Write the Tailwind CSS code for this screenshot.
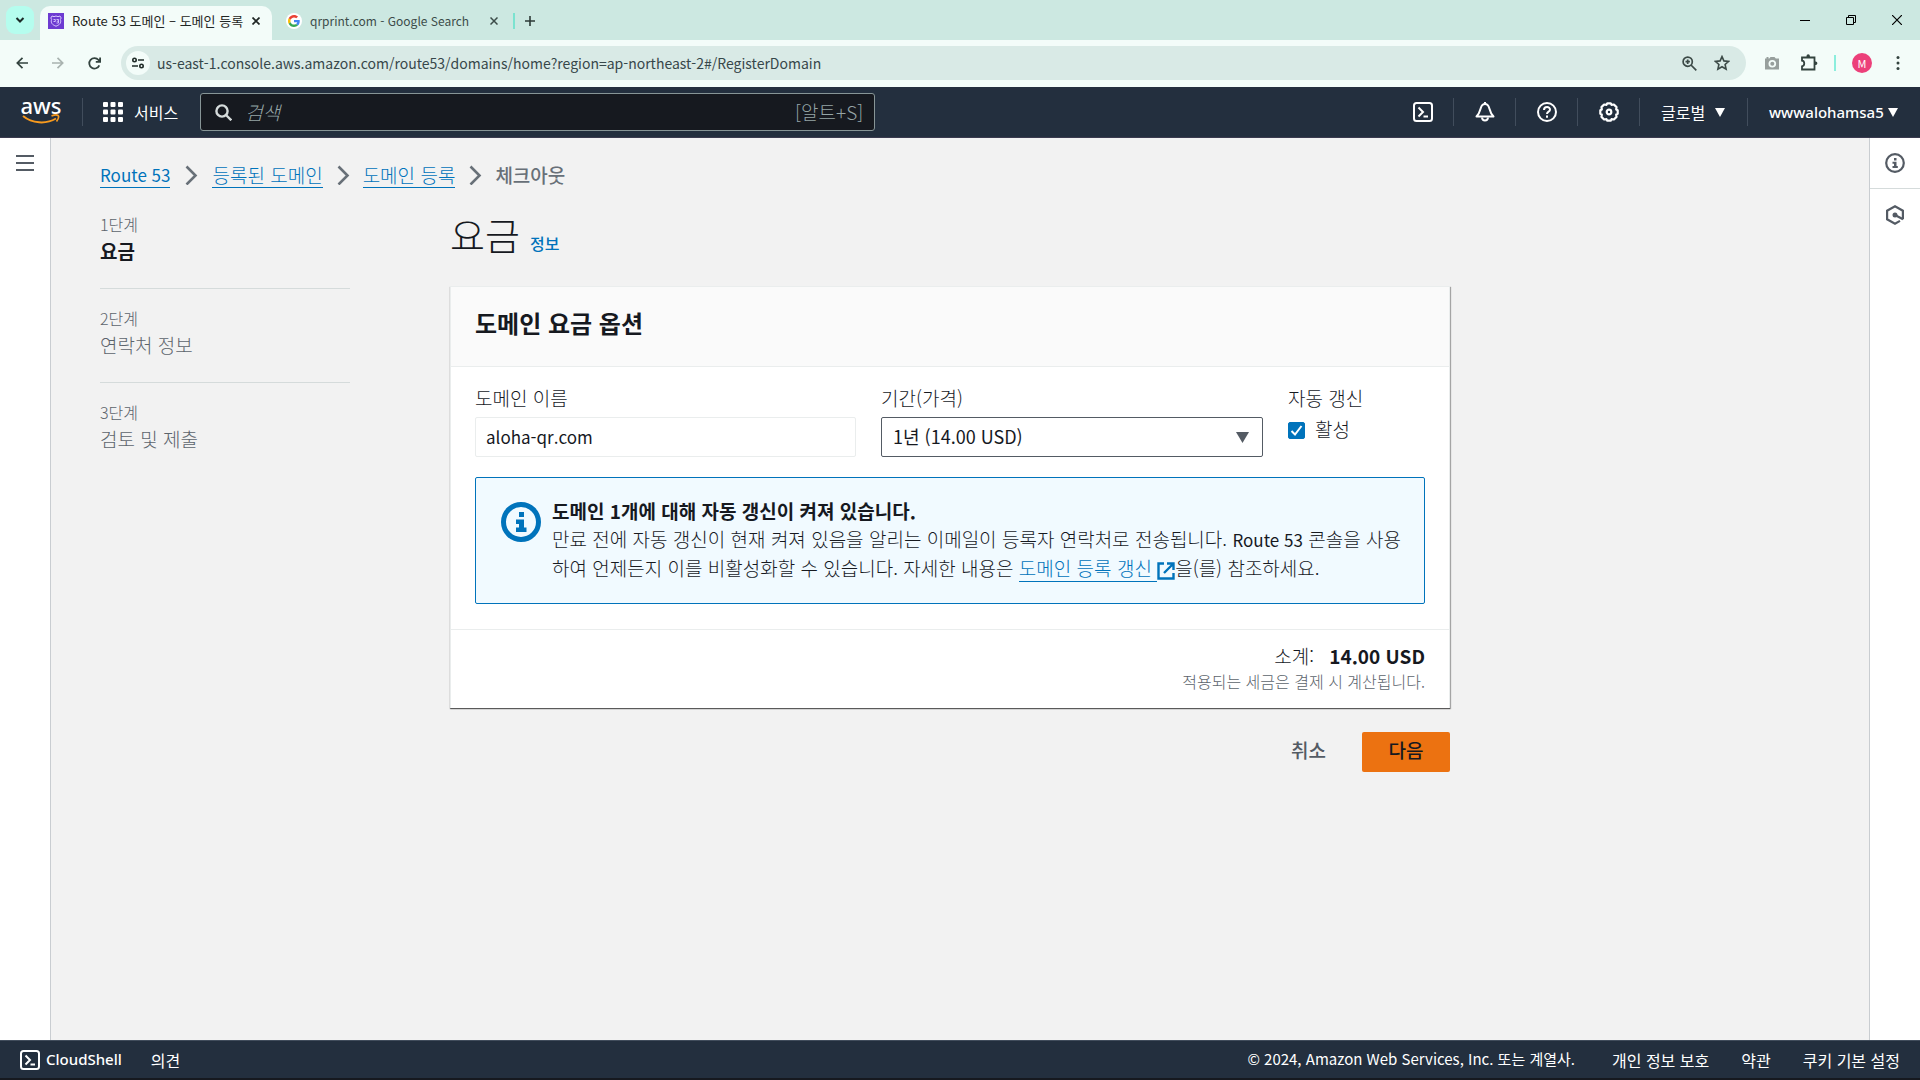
<!DOCTYPE html>
<html lang="ko">
<head>
  <meta charset="UTF-8" />
  <meta name="viewport" content="width=device-width, initial-scale=1" />
  <title>Route 53 도메인 – 도메인 등록</title>
  <script src="https://cdn.jsdelivr.net/npm/@tailwindcss/browser@4"></script>
</head>
<body class="min-h-screen flex flex-col bg-[#f2f2f2] text-[#16191f] font-['Noto_Sans_CJK_KR',sans-serif]">

  <!-- Browser tabs -->
  <div class="h-10 shrink-0 flex items-end bg-[#cce8e1] pl-[6px]">
    <button aria-label="탭 검색" class="size-[28px] mb-[6px] rounded-[9px] bg-[#b5fdee] flex items-center justify-center">
      <svg class="size-[10px]" viewBox="0 0 10 10" fill="none" stroke="#1c2b28" stroke-width="2"><path d="M1.500 3l3.500 3.500L8.500 3" /></svg>
    </button>
    <div class="w-[232px] h-[34px] ml-[6px] pl-2 pr-3 pb-1 flex items-center bg-[#f3fcf9] rounded-t-[10px] text-[13px] text-[#1f2624]">
      <svg class="size-4 shrink-0" viewBox="0 0 16 16">
        <rect width="16" height="16" fill="#6d3bd1" />
        <path d="M4 3l2 .7L8 3l2 .7L12 3l1.200 2-.8 1.500c1.200 3.500-1 5.500-4.400 6.700C4.600 12 2.400 10 3.600 6.500L2.800 5z" fill="none" stroke="#d9c8ff" stroke-width="1" />
        <path d="M5.500 6.500h1.800v2H5.500M8.500 6.500h2v3.500h-2M8.800 8.200h1.500" fill="none" stroke="#d9c8ff" stroke-width=".9" />
      </svg>
      <span class="ml-2 flex-1 whitespace-nowrap">Route 53 도메인 – 도메인 등록</span>
      <button aria-label="탭 닫기">
        <svg class="size-2" viewBox="0 0 8 8" stroke="#1f2624" stroke-width="1.700"><path d="M.5.5l7 7M7.500.5l-7 7" /></svg>
      </button>
    </div>
    <div class="w-[241px] h-[34px] pl-[14px] pr-[15px] pb-1 flex items-center text-[12px] text-[#3c4c49]">
      <span class="size-4 rounded-full bg-white flex items-center justify-center shrink-0">
        <svg class="size-3" viewBox="0 0 48 48">
          <path fill="#EA4335" d="M24 9.500c3.540 0 6.710 1.220 9.210 3.600l6.850-6.850C35.900 2.380 30.470 0 24 0 14.620 0 6.510 5.380 2.560 13.220l7.980 6.190C12.430 13.720 17.740 9.500 24 9.500z" />
          <path fill="#4285F4" d="M46.980 24.550c0-1.570-.15-3.090-.38-4.550H24v9.020h12.940c-.58 2.960-2.260 5.480-4.780 7.180l7.730 6c4.510-4.180 7.090-10.360 7.090-17.650z" />
          <path fill="#FBBC05" d="M10.530 28.590c-.48-1.450-.76-2.990-.76-4.590s.27-3.140.76-4.590l-7.980-6.190C.92 16.460 0 20.120 0 24c0 3.880.92 7.540 2.560 10.780l7.970-6.190z" />
          <path fill="#34A853" d="M24 48c6.480 0 11.930-2.130 15.890-5.810l-7.730-6c-2.150 1.450-4.920 2.300-8.160 2.300-6.260 0-11.570-4.220-13.470-9.910l-7.980 6.190C6.510 42.620 14.620 48 24 48z" />
        </svg>
      </span>
      <span class="ml-2 flex-1 whitespace-nowrap">qrprint.com - Google Search</span>
      <button aria-label="탭 닫기">
        <svg class="size-2" viewBox="0 0 8 8" stroke="#3c4c49" stroke-width="1.500"><path d="M.5.5l7 7M7.500.5l-7 7" /></svg>
      </button>
    </div>
    <div class="h-[34px] pb-1 flex items-center">
      <span class="w-[2px] h-4 bg-[#7be3d0]"></span>
      <button aria-label="새 탭" class="ml-[10px]">
        <svg class="size-[10px]" viewBox="0 0 10 10" stroke="#2d3a37" stroke-width="1.600"><path d="M5 0v10M0 5h10" /></svg>
      </button>
    </div>
    <div class="ml-auto h-10 flex items-center">
      <button aria-label="최소화" class="w-[46px] flex justify-center"><svg class="size-[10px]" viewBox="0 0 10 10" stroke="#000"><path d="M0 5.500h10" /></svg></button>
      <button aria-label="이전 크기로 복원" class="w-[46px] flex justify-center"><svg class="size-[10px]" viewBox="0 0 10 10" fill="none" stroke="#000"><path d="M.5 2.500h7v7h-7zM2.500 2.500v-2h7v7h-2" /></svg></button>
      <button aria-label="닫기" class="w-[46px] flex justify-center"><svg class="size-[10px]" viewBox="0 0 10 10" stroke="#000" stroke-width="1.200"><path d="M0 0l10 10M10 0L0 10" /></svg></button>
    </div>
  </div>

  <!-- Address bar -->
  <div class="h-[47px] shrink-0 pb-px flex items-center bg-[#f3fcf9] text-[#37474a]">
    <div class="w-[121px] pl-4 flex gap-6">
      <button aria-label="뒤로"><svg class="size-3" viewBox="0 0 12 12" fill="none" stroke="#33433f" stroke-width="1.700"><path d="M12 6H1.500M6.500.8L1.300 6l5.200 5.200" /></svg></button>
      <button aria-label="앞으로"><svg class="size-3" viewBox="0 0 12 12" fill="none" stroke="#a9b3b0" stroke-width="1.700"><path d="M0 6h10.500M5.500.8L10.700 6l-5.200 5.200" /></svg></button>
      <button aria-label="새로고침"><svg class="size-[13px]" viewBox="0 0 13 13" fill="none" stroke="#33433f" stroke-width="1.800"><path d="M11.300 8.300A5.200 5.200 0 1 1 10.500 3l1.500 1.500M12.100.5v4.300H7.800" /></svg></button>
    </div>
    <div class="flex-1 h-[34px] rounded-full bg-[#d9eae6] flex items-center pl-[5px] pr-4">
      <span class="size-6 rounded-full bg-[#f3fcf9] flex items-center justify-center">
        <svg class="size-3" viewBox="0 0 12 12" fill="none" stroke="#1f2b28" stroke-width="1.600"><circle cx="2.500" cy="3" r="1.700" /><path d="M6 3h6M0 9h6" /><circle cx="9.500" cy="9" r="1.700" /></svg>
      </span>
      <input id="url" type="text" aria-label="주소" class="ml-[7px] flex-1 h-8 text-[14px] bg-transparent outline-none" value="us-east-1.console.aws.amazon.com/route53/domains/home?region=ap-northeast-2#/RegisterDomain" />
      <button aria-label="확대/축소"><svg class="size-[15px]" viewBox="0 0 15 15" fill="none" stroke="#3c4a47" stroke-width="1.700"><circle cx="5.700" cy="5.700" r="4.600" /><path d="M9 9l5.300 5.300M5.700 3.500v4.400M3.500 5.700h4.400" /></svg></button>
      <button aria-label="북마크" class="ml-[17px]"><svg class="size-4" viewBox="0 0 16 16" fill="none" stroke="#3c4a47" stroke-width="1.600"><path d="M8 1.600l1.900 4.300 4.700.5-3.500 3.100 1 4.600L8 11.700l-4.100 2.400 1-4.600L1.400 6.400l4.700-.5z" /></svg></button>
    </div>
    <div class="w-[174px] pl-[18px] pr-5 flex items-center">
      <button aria-label="캡처"><svg class="size-4" viewBox="0 0 16 16" fill="#979f9d"><path d="M1 3.500h1.500V2h2v1.500h.8L6.500 2h4l1.300 1.500H15v11H1z" /><circle cx="8.300" cy="8.800" r="3.800" fill="#f3fcf9" /><circle cx="8.300" cy="8.800" r="2" /></svg></button>
      <button aria-label="확장 프로그램" class="ml-5"><svg class="size-[18px]" viewBox="0 0 18 18" fill="none" stroke="#33433f" stroke-width="1.800"><path d="M2 3.500h12.500v12H2v-3.200c3-.3 3-5.300 0-5.600z" /><path d="M6.500 3V2a1.700 1.700 0 0 1 3.400 0v1zM15 7.500h.7a1.700 1.700 0 0 1 0 3.400H15z" fill="#33433f" stroke="none" /></svg></button>
      <span class="ml-4 w-[2px] h-4 bg-[#8beedd]"></span>
      <span class="ml-4 size-5 rounded-full bg-[#ec407a] text-white text-[11px] leading-5 text-center">M</span>
      <button aria-label="메뉴" class="ml-auto"><svg class="w-1 h-4" viewBox="0 0 4 16" fill="#33433f"><circle cx="2" cy="2.500" r="1.500" /><circle cx="2" cy="8" r="1.500" /><circle cx="2" cy="13.500" r="1.500" /></svg></button>
    </div>
  </div>

  <!-- AWS navigation -->
  <header class="h-[51px] shrink-0 flex items-center bg-[#232f3e] text-white text-[16px] border-b border-[#3b3b4f]">
    <a href="#" class="ml-[22px] w-[38px] pb-[2px] flex flex-col items-center">
      <span class="h-[17px] text-[22px] leading-4 font-medium font-['Noto_Sans',sans-serif]">aws</span>
      <svg class="w-[38px] h-[11px]" viewBox="0 0 38 11" fill="none" stroke="#f79a1e" stroke-width="2"><path d="M1 2c9 7.500 23 8.500 33 2.500" /><path d="M29.500 2c3-1.200 5.500-1.300 6.500-.5s.3 3.500-1.500 6" stroke-width="1.700" /></svg>
    </a>
    <span class="ml-[22px] w-px h-7 bg-[#414d5c]"></span>
    <button class="ml-5 flex items-center gap-[11px]">
      <svg class="size-5" viewBox="0 0 20 20" fill="#fff"><rect width="5" height="5" rx="1" /><rect x="7.500" width="5" height="5" rx="1" /><rect x="15" width="5" height="5" rx="1" /><rect y="7.500" width="5" height="5" rx="1" /><rect x="7.500" y="7.500" width="5" height="5" rx="1" /><rect x="15" y="7.500" width="5" height="5" rx="1" /><rect y="15" width="5" height="5" rx="1" /><rect x="7.500" y="15" width="5" height="5" rx="1" /><rect x="15" y="15" width="5" height="5" rx="1" /></svg>
      <span>서비스</span>
    </button>
    <div class="ml-[22px] w-[675px] h-[38px] flex items-center px-[11px] bg-[#16191f] border border-[#879596] rounded-[3px] text-[19px] text-[#95a5a6]">
      <svg class="mx-[3px] size-[17px]" viewBox="0 0 17 17" fill="none" stroke="#d5dbdb" stroke-width="2.400"><circle cx="7" cy="7" r="5.600" /><path d="M11 11l5.300 5.300" /></svg>
      <input id="search" type="search" aria-label="검색" placeholder="검색" class="ml-[10px] flex-1 min-w-0 bg-transparent outline-none font-light placeholder:italic placeholder:text-[#95a5a6]" />
      <span class="font-light">[알트+S]</span>
    </div>
    <div class="ml-auto flex items-center">
      <button aria-label="CloudShell" class="w-[62px] h-7 flex items-center justify-center border-r border-[#414d5c]">
        <svg class="size-5" viewBox="0 0 20 20" fill="none" stroke="#fff" stroke-width="2"><rect x="1" y="1" width="18" height="18" rx="2.500" /><path d="M5.500 5.500L10 10l-4.500 4.500M10.500 14.500H15" /></svg>
      </button>
      <button aria-label="알림" class="w-[62px] h-7 flex items-center justify-center border-r border-[#414d5c]">
        <svg class="size-5" viewBox="0 0 20 20" fill="none" stroke="#fff" stroke-width="2" stroke-linejoin="round"><path d="M1.500 14.500C4.500 11.500 5 9 5.800 6 6.500 3.500 8 2 10 2s3.500 1.500 4.200 4c.8 3 1.300 5.500 4.300 8.500z" /><path d="M10 2V0M7 15.500c.3 4 5.700 4 6 0" /></svg>
      </button>
      <button aria-label="도움말" class="w-[62px] h-7 flex items-center justify-center border-r border-[#414d5c]">
        <svg class="size-5" viewBox="0 0 20 20" fill="none" stroke="#fff" stroke-width="2"><circle cx="10" cy="10" r="9" /><path d="M7 8c0-4 6.200-3.700 6-.3-.1 2-3 2-3 4.300" /><path d="M10 13.500v2.200" /></svg>
      </button>
      <button aria-label="설정" class="w-[62px] h-7 flex items-center justify-center border-r border-[#414d5c]">
        <svg class="size-5" viewBox="0 0 20 20" fill="none" stroke="#fff" stroke-width="2.200" stroke-linejoin="round"><path d="M8.300 1.300h3.400l.8 1.500 2.400-.3 2.600 2.600-.3 2.400 1.500.8v3.400l-1.500.8.3 2.400-2.600 2.600-2.400-.3-.8 1.500H8.300l-.8-1.500-2.400.3-2.600-2.600.3-2.400-1.500-.8V8.300l1.500-.8-.3-2.400 2.600-2.600 2.400.3z" /><circle cx="10" cy="10" r="2.300" /></svg>
      </button>
      <button class="w-[108px] h-7 pl-[21px] flex items-center border-r border-[#414d5c]">글로벌
        <svg class="ml-[10px] w-[10px] h-[9px]" viewBox="0 0 10 9" fill="#fff"><path d="M0 0h10L5 9z" /></svg>
      </button>
      <button class="w-[172px] h-7 pl-[21px] flex items-center gap-1 text-[15px] font-medium font-['Noto_Sans',sans-serif]">wwwalohamsa5
        <svg class="w-[10px] h-[9px]" viewBox="0 0 10 9" fill="#fff"><path d="M0 0h10L5 9z" /></svg>
      </button>
    </div>
  </header>

  <div class="flex-1 flex">
    <aside class="w-[51px] shrink-0 bg-white border-r border-[#c9cdd1] pt-[14px] pl-4">
      <button aria-label="탐색 열기"><svg class="w-[18px] h-4" viewBox="0 0 18 16" stroke="#545b64" stroke-width="2"><path d="M0 1h18M0 8h18M0 15h18" /></svg></button>
    </aside>

    <main class="flex-1 pl-[49px] pr-10 pt-[21px]">
      <nav aria-label="이동 경로" class="flex items-center h-8 text-[19px] leading-6 text-[#0073bb]">
        <a href="#" class="border-b border-[#0073bb] text-[17px]">Route 53</a>
        <svg class="mx-[14px] w-[14px] h-5" viewBox="0 0 14 20" fill="none" stroke="#687078" stroke-width="2.600"><path d="M2.500 1.500l9 9-9 9" /></svg>
        <a href="#" class="border-b border-[#0073bb] font-light">등록된 도메인</a>
        <svg class="mx-[13px] w-[14px] h-5" viewBox="0 0 14 20" fill="none" stroke="#687078" stroke-width="2.600"><path d="M2.500 1.500l9 9-9 9" /></svg>
        <a href="#" class="border-b border-[#0073bb] font-light">도메인 등록</a>
        <svg class="mx-[13px] w-[14px] h-5" viewBox="0 0 14 20" fill="none" stroke="#687078" stroke-width="2.600"><path d="M2.500 1.500l9 9-9 9" /></svg>
        <span class="font-medium text-[#687078]">체크아웃</span>
      </nav>

      <div class="flex max-w-[1350px] mt-5">
        <ol class="w-[250px] shrink-0 mr-[100px] text-[19px] leading-7 text-[#5c646c] font-light">
          <li class="h-[78px] border-b border-[#d5dbdb]">
            <p class="text-[16px] leading-[26px]">1단계</p>
            <p class="font-bold text-[#16191f]">요금</p>
          </li>
          <li class="h-[94px] pt-4 border-b border-[#d5dbdb]">
            <p class="text-[16px] leading-[26px]">2단계</p>
            <p>연락처 정보</p>
          </li>
          <li class="pt-4">
            <p class="text-[16px] leading-[26px]">3단계</p>
            <p>검토 및 제출</p>
          </li>
        </ol>

        <form class="flex-1" onsubmit="return false;">
          <div class="flex items-baseline gap-[10px] h-[75px]">
            <h1 class="text-[38px] leading-[46px] font-light">요금</h1>
            <a href="#" class="text-[16px] font-medium text-[#0073bb]">정보</a>
          </div>

          <section class="bg-white border-x border-t border-[#eaeded] shadow-[0_1px_1px_0_#00000080,1px_1px_1px_0_#00000040]">
            <h2 class="h-20 px-6 pt-5 bg-[#fafafa] border-b border-[#eaeded] text-[24px] leading-8 font-bold">도메인 요금 옵션</h2>

            <div class="px-6 pt-[17px] pb-[25px] text-[19px] leading-7">
              <div class="grid grid-cols-[381px_382px_1fr] gap-x-[25px]">
                <div>
                  <label for="domain" class="block font-light">도메인 이름</label>
                  <input id="domain" type="text" readonly value="aloha-qr.com" class="mt-[5px] w-full h-10 px-[10px] pb-[2px] text-[17px] border border-[#eaeded] rounded-xs" />
                </div>
                <div>
                  <label for="period" class="block font-light">기간(가격)</label>
                  <div class="relative mt-[5px]">
                    <select id="period" class="appearance-none w-full h-10 px-[11px] pb-[2px] text-[18px] border border-[#545b64] rounded-xs bg-white">
                      <option>1년 (14.00 USD)</option>
                    </select>
                    <svg class="absolute right-[14px] top-[15px] w-[13px] h-[11px] pointer-events-none" viewBox="0 0 13 11" fill="#545b64"><path d="M0 0h13L6.500 11z" /></svg>
                  </div>
                </div>
                <fieldset class="font-light">
                  <legend>자동 갱신</legend>
                  <div class="relative flex items-center gap-[10px] mt-[3px]">
                    <input id="renew" type="checkbox" checked class="appearance-none size-[17px] rounded-xs bg-white border border-[#0073bb] checked:bg-[#0073bb]" />
                    <svg class="absolute left-[2px] top-[9px] size-[13px] pointer-events-none" viewBox="0 0 13 13" fill="none" stroke="#fff" stroke-width="2"><path d="M1.500 7l3.500 3.500L11.500 2" /></svg>
                    <label for="renew" class="pb-[2px]">활성</label>
                  </div>
                </fieldset>
              </div>

              <div class="mt-5 h-[127px] pl-[25px] pr-4 pt-[19px] flex bg-[#f1faff] border border-[#0073bb] rounded-xs">
                <svg class="mt-[5px] size-10 shrink-0" viewBox="0 0 40 40" fill="#0073bb"><circle cx="20" cy="20" r="17.500" fill="none" stroke="#0073bb" stroke-width="5" /><path d="M18 10h5v5h-5zM15 17.500h8v8h2.500V30H15v-4.500h3V22h-3z" /></svg>
                <div class="ml-[11px]">
                  <p class="font-bold">도메인 1개에 대해 자동 갱신이 켜져 있습니다.</p>
                  <p class="font-light">만료 전에 자동 갱신이 현재 켜져 있음을 알리는 이메일이 등록자 연락처로 전송됩니다. <span class="text-[17px] font-normal">Route 53</span> 콘솔을 사용하여 언제든지 이를 비활성화할 수 있습니다. 자세한 내용은 <a href="#" class="text-[#0073bb]"><span class="border-b border-[#0073bb]">도메인 등록 갱신 </span><svg class="inline size-[18px]" viewBox="0 0 18 18" fill="none" stroke="#0073bb" stroke-width="2.400"><path d="M7 1.500H1.500v15h15V11M10 1.500h6.500V8M16 2L7 11" /></svg></a>을(를) 참조하세요.</p>
                </div>
              </div>
            </div>

            <div class="h-[79px] px-6 pt-3 border-t border-[#eaeded] text-right">
              <p class="text-[19px] leading-7 font-light">소계: <strong class="ml-[10px] font-bold">14.00 USD</strong></p>
              <p class="text-[16px] leading-[22px] font-light text-[#5c646c]">적용되는 세금은 결제 시 계산됩니다.</p>
            </div>
          </section>

          <div class="mt-6 flex justify-end gap-3 text-[19px] font-medium">
            <button class="h-10 px-6 pb-1 text-[#545b64]">취소</button>
            <button class="h-10 w-[88px] pb-1 bg-[#ec7211] rounded-xs">다음</button>
          </div>
        </form>
      </div>
    </main>

    <aside class="w-[51px] shrink-0 bg-white border-l border-[#c9cdd1]">
      <button aria-label="정보" class="w-full h-[51px] flex items-center justify-center border-b border-[#d5dbdb]">
        <svg class="size-5" viewBox="0 0 20 20" fill="#545b64"><circle cx="10" cy="10" r="8.800" fill="none" stroke="#545b64" stroke-width="2.200" /><path d="M9 5h2.500v2.500H9zM7.500 8.700h4V13h1.300v2H7.500v-2H9v-2.200H7.500z" /></svg>
      </button>
      <button aria-label="튜토리얼" class="w-full h-[51px] flex items-center justify-center">
        <svg class="size-5" viewBox="0 0 20 20" fill="none" stroke="#545b64" stroke-width="2.200"><path d="M17.900 14.300V5.700L10 1.300 2.100 5.700v8.600L10 18.700l5-2.800" /><circle cx="10" cy="10" r="2.500" fill="#545b64" stroke="none" /><path d="M10 10l8 4.300" /></svg>
      </button>
    </aside>
  </div>

  <footer class="h-10 shrink-0 px-5 flex items-center bg-[#232f3e] text-white text-[16px] border-t border-t-[#414d5c] border-b-2 border-b-[#16191f]">
    <button class="flex items-center gap-[6px] text-[15px] font-medium font-['Noto_Sans',sans-serif]">
      <svg class="size-5" viewBox="0 0 20 20" fill="none" stroke="#fff" stroke-width="2"><rect x="1" y="1" width="18" height="18" rx="2.500" /><path d="M5.500 5.500L10 10l-4.500 4.500M10.500 14.500H15" /></svg>
      CloudShell
    </button>
    <a href="#" class="ml-[29px]">의견</a>
    <span class="ml-auto text-[15px]">© 2024, Amazon Web Services, Inc. 또는 계열사.</span>
    <a href="#" class="ml-[37px]">개인 정보 보호</a>
    <a href="#" class="ml-8">약관</a>
    <a href="#" class="ml-8">쿠키 기본 설정</a>
  </footer>

</body>
</html>
